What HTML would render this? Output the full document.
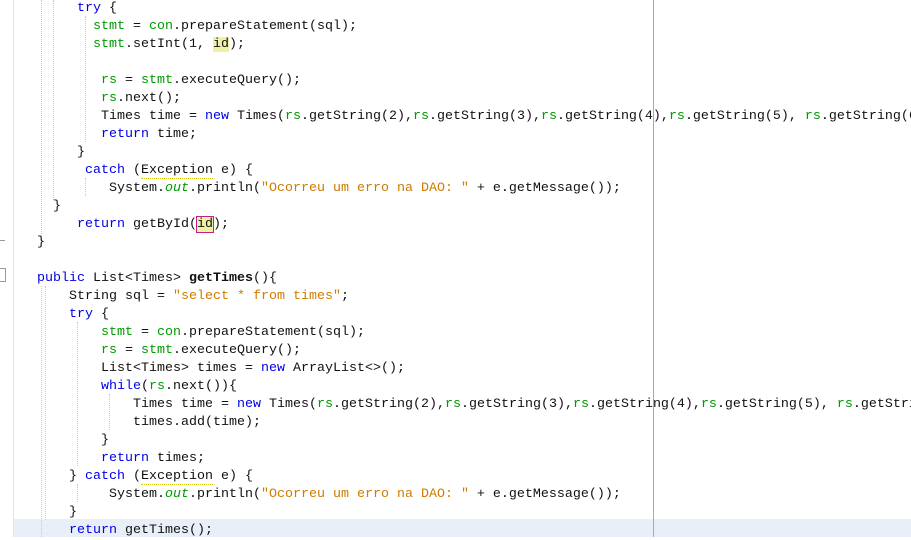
<!DOCTYPE html>
<html><head><meta charset="utf-8"><style>
body{margin:0;width:911px;height:537px;overflow:hidden;background:#fff;position:relative;font-family:"Liberation Mono",monospace;font-size:13.33px;}
#c{position:absolute;left:0;top:2px;width:911px;height:537px;}
.l{position:absolute;white-space:pre;line-height:18px;height:18px;color:#111;}
.k{color:#0000e6}.f{color:#009900}.s{color:#ce7b00}.i{font-style:italic;color:#009900}
.g{position:absolute;width:0;border-left:1px dotted #c8c8c8;}
.hl{background:#f0f0a8}
.u{border-bottom:1px dotted #d8c800}
</style></head><body>
<div style="position:absolute;left:13px;top:519px;width:898px;height:18px;background:#e9eff8"></div>
<div class="g" style="left:13px;top:0;height:537px;border-left:1px solid #e4e4e4"></div>
<div class="g" style="left:41px;top:0;height:240px"></div>
<div class="g" style="left:41px;top:286px;height:251px"></div>
<div class="g" style="left:45px;top:286px;height:234px"></div>
<div class="g" style="left:77px;top:322px;height:144px"></div>
<div class="g" style="left:77px;top:484px;height:18px"></div>
<div class="g" style="left:109px;top:394px;height:36px"></div>
<div class="g" style="left:85px;top:16px;height:126px"></div>
<div class="g" style="left:85px;top:178px;height:18px"></div>
<div class="g" style="left:53px;top:0;height:200px"></div>
<div style="position:absolute;left:653px;top:0;width:1px;height:537px;background:#f08a9a"></div>
<div style="position:absolute;left:0;top:240px;width:5px;height:1px;background:#999"></div>
<div style="position:absolute;left:0;top:268px;width:5px;height:12px;border:1px solid #999;border-left:none"></div>
<div id="c">
<div class="l" style="left:77px;top:-2px"><span class="k">try</span> {</div>
<div class="l" style="left:93px;top:16px"><span class="f">stmt</span> = <span class="f">con</span>.prepareStatement(sql);</div>
<div class="l" style="left:93px;top:34px"><span class="f">stmt</span>.setInt(1, <span class="hl">id</span>);</div>
<div class="l" style="left:101px;top:70px"><span class="f">rs</span> = <span class="f">stmt</span>.executeQuery();</div>
<div class="l" style="left:101px;top:88px"><span class="f">rs</span>.next();</div>
<div class="l" style="left:101px;top:106px">Times time = <span class="k">new</span> Times(<span class="f">rs</span>.getString(2),<span class="f">rs</span>.getString(3),<span class="f">rs</span>.getString(4),<span class="f">rs</span>.getString(5), <span class="f">rs</span>.getString(6</div>
<div class="l" style="left:101px;top:124px"><span class="k">return</span> time;</div>
<div class="l" style="left:77px;top:142px">}</div>
<div class="l" style="left:85px;top:160px"><span class="k">catch</span> (<span class="u">Exception</span> e) {</div>
<div class="l" style="left:109px;top:178px">System.<span class="i">out</span>.println(<span class="s">"Ocorreu um erro na DAO: "</span> + e.getMessage());</div>
<div class="l" style="left:53px;top:196px">}</div>
<div class="l" style="left:77px;top:214px"><span class="k">return</span> getById(<span class="hl" style="outline:1px solid #c0208a">id</span>);</div>
<div class="l" style="left:37px;top:232px">}</div>
<div class="l" style="left:37px;top:268px"><span class="k">public</span> List&lt;Times&gt; <b>getTimes</b>(){</div>
<div class="l" style="left:69px;top:286px">String sql = <span class="s">"select * from times"</span>;</div>
<div class="l" style="left:69px;top:304px"><span class="k">try</span> {</div>
<div class="l" style="left:101px;top:322px"><span class="f">stmt</span> = <span class="f">con</span>.prepareStatement(sql);</div>
<div class="l" style="left:101px;top:340px"><span class="f">rs</span> = <span class="f">stmt</span>.executeQuery();</div>
<div class="l" style="left:101px;top:358px">List&lt;Times&gt; times = <span class="k">new</span> ArrayList&lt;&gt;();</div>
<div class="l" style="left:101px;top:376px"><span class="k">while</span>(<span class="f">rs</span>.next()){</div>
<div class="l" style="left:133px;top:394px">Times time = <span class="k">new</span> Times(<span class="f">rs</span>.getString(2),<span class="f">rs</span>.getString(3),<span class="f">rs</span>.getString(4),<span class="f">rs</span>.getString(5), <span class="f">rs</span>.getStrin</div>
<div class="l" style="left:133px;top:412px">times.add(time);</div>
<div class="l" style="left:101px;top:430px">}</div>
<div class="l" style="left:101px;top:448px"><span class="k">return</span> times;</div>
<div class="l" style="left:69px;top:466px">} <span class="k">catch</span> (<span class="u">Exception</span> e) {</div>
<div class="l" style="left:109px;top:484px">System.<span class="i">out</span>.println(<span class="s">"Ocorreu um erro na DAO: "</span> + e.getMessage());</div>
<div class="l" style="left:69px;top:502px">}</div>
<div class="l" style="left:69px;top:520px"><span class="k">return</span> getTimes();</div>
</div>
</body></html>
